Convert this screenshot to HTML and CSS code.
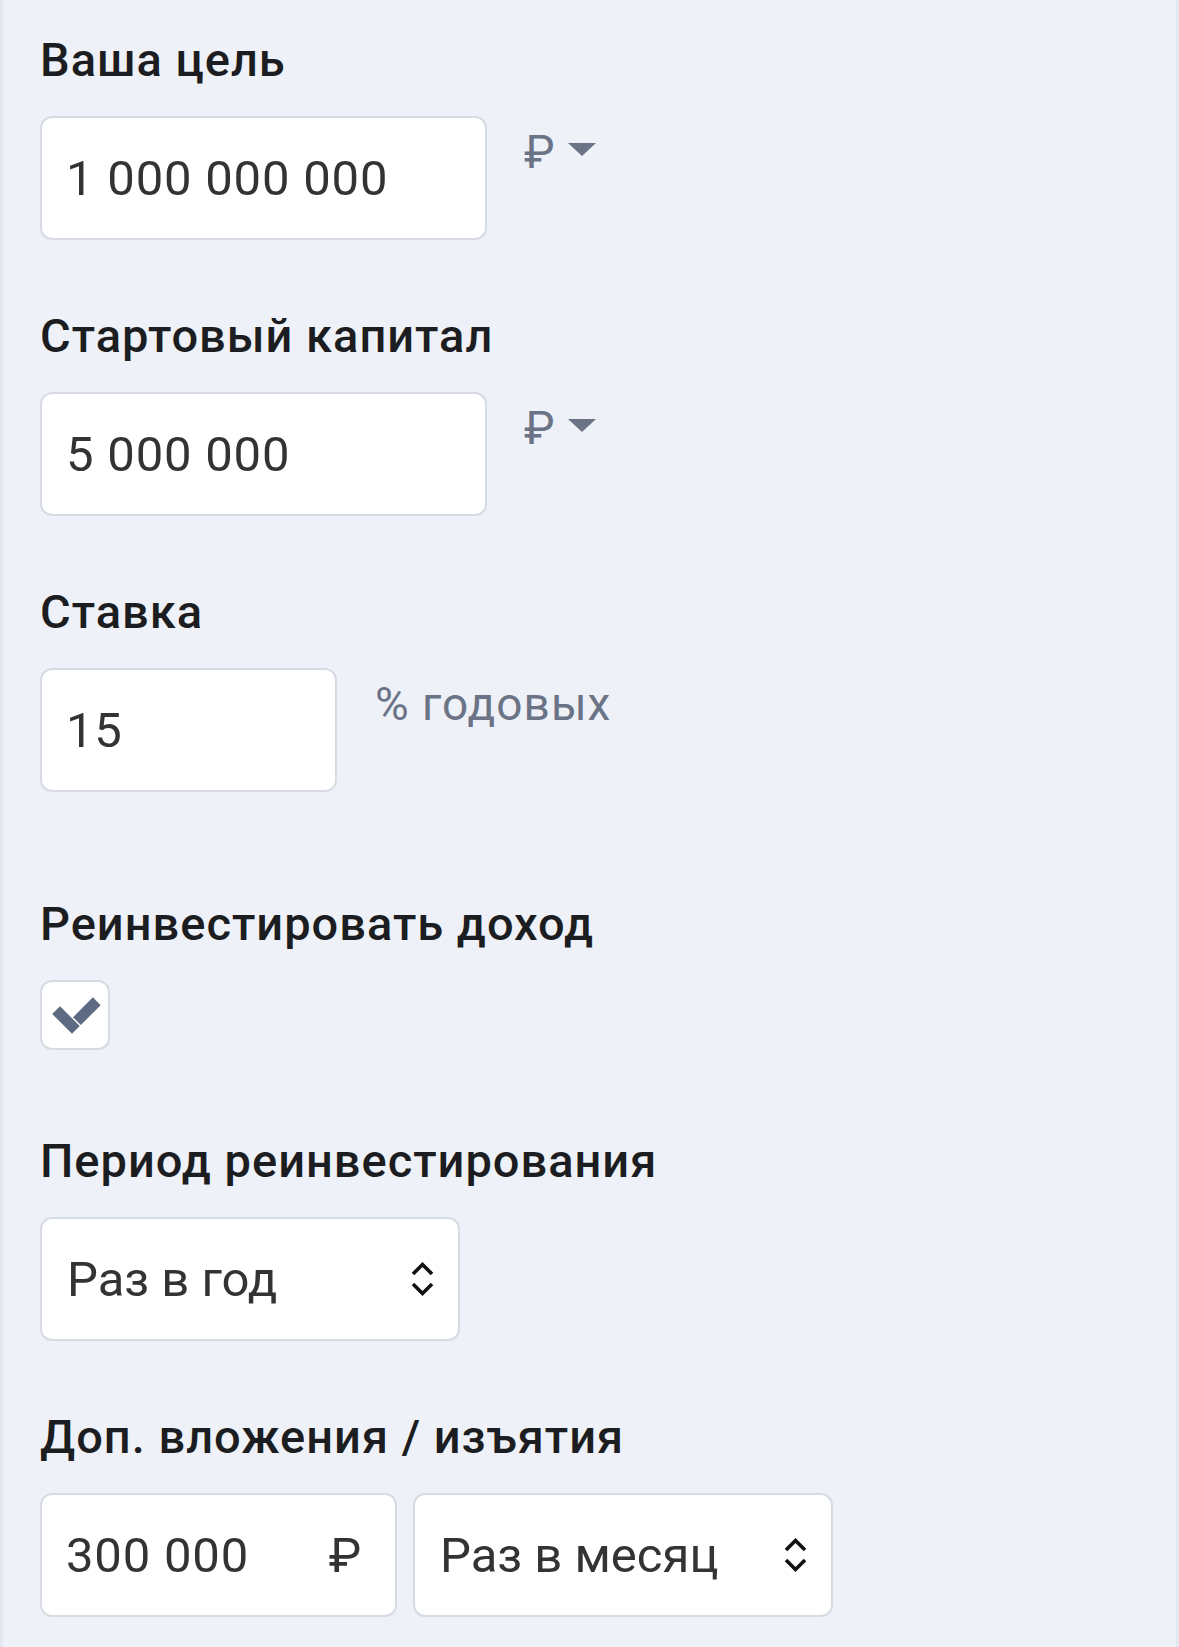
FILE: index.html
```html
<!DOCTYPE html>
<html lang="ru">
<head>
  <meta charset="UTF-8">
  <title>Калькулятор цели</title>
  <link rel="stylesheet" href="styles.css">
</head>
<body>
  <div class="page">

    <div class="field">
      <div class="field_label">Ваша цель</div>
      <div class="field_row">
        <div class="box box_wide num">1&nbsp;000&nbsp;000&nbsp;000</div>
        <div class="suffix">
          <span>₽</span>
          <svg class="caret" width="28" height="13" viewBox="0 0 28 13"><polygon points="0,0 28,0 14,13" fill="#6b7386"/></svg>
        </div>
      </div>
    </div>

    <div class="field">
      <div class="field_label">Стартовый капитал</div>
      <div class="field_row">
        <div class="box box_wide num">5&nbsp;000&nbsp;000</div>
        <div class="suffix">
          <span>₽</span>
          <svg class="caret" width="28" height="13" viewBox="0 0 28 13"><polygon points="0,0 28,0 14,13" fill="#6b7386"/></svg>
        </div>
      </div>
    </div>

    <div class="field field_rate">
      <div class="field_label">Ставка</div>
      <div class="field_row">
        <div class="box box_rate num">15</div>
        <div class="suffix suffix_text">% годовых</div>
      </div>
    </div>

    <div class="field field_check">
      <div class="field_label">Реинвестировать доход</div>
      <div class="checkbox">
        <svg width="66" height="66" viewBox="0 0 66 66">
          <polygon points="17.99,24.21 37.79,44.01 30.01,51.79 10.21,31.99" fill="#5e6a81"/>
          <polygon points="31.07,35.17 38.85,42.95 58.65,23.15 50.87,15.37" fill="#5e6a81"/>
        </svg>
      </div>
    </div>

    <div class="field">
      <div class="field_label">Период реинвестирования</div>
      <div class="box select select_period">
        <span>Раз в год</span>
        <svg class="chevrons" width="25" height="36" viewBox="0 0 25 36">
          <polyline points="3,13 12.5,3.5 22,13" fill="none" stroke="#111" stroke-width="3.6"/>
          <polyline points="3,23 12.5,32.5 22,23" fill="none" stroke="#111" stroke-width="3.6"/>
        </svg>
      </div>
    </div>

    <div class="field">
      <div class="field_label">Доп. вложения / изъятия</div>
      <div class="field_row field_row_gap">
        <div class="box box_money num">
          <span>300&nbsp;000</span>
          <span>₽</span>
        </div>
        <div class="box select select_freq">
          <span>Раз в месяц</span>
          <svg class="chevrons" width="25" height="36" viewBox="0 0 25 36">
            <polyline points="3,13 12.5,3.5 22,13" fill="none" stroke="#111" stroke-width="3.6"/>
            <polyline points="3,23 12.5,32.5 22,23" fill="none" stroke="#111" stroke-width="3.6"/>
          </svg>
        </div>
      </div>
    </div>

  </div>
</body>
</html>
```
FILE: styles.css
```css
html, body {
  margin: 0;
  padding: 0;
}
body {
  background-color: #eef1f7;
  font-family: Roboto, "Noto Sans", "Liberation Sans", sans-serif;
}
.page {
  min-height: 1647px;
  box-sizing: border-box;
  padding: 32px 0 0 37px;
  border-left: 3px solid #e3e7ef;
  border-right: 3px solid #e3e7ef;
}
.field {
  margin-bottom: 68px;
}
.field_rate {
  margin-bottom: 104px;
}
.field_check {
  margin-bottom: 83px;
}
.field_label {
  font-size: 47px;
  line-height: 56px;
  font-weight: 500;
  letter-spacing: 1px;
  color: #1c1d21;
  margin-bottom: 28px;
}
.field_row {
  display: flex;
  align-items: flex-start;
}
.field_row_gap {
  gap: 16px;
}
.box {
  display: flex;
  align-items: center;
  box-sizing: border-box;
  height: 124px;
  padding: 0 24px;
  background-color: #fff;
  border: 2px solid #d7dbe2;
  border-radius: 12px;
  font-size: 49px;
  color: #333;
}
.num {
  letter-spacing: 0.8px;
}
.box_wide {
  width: 447px;
}
.box_rate {
  width: 297px;
}
.box_money {
  width: 357px;
  justify-content: space-between;
  padding-right: 33px;
}
.select {
  justify-content: space-between;
  padding: 0 23px 0 25px;
}
.select_period {
  width: 420px;
}
.select_freq {
  width: 420px;
}
.suffix {
  display: flex;
  align-items: flex-start;
  margin-left: 37px;
  padding-top: 8px;
  font-size: 46px;
  line-height: 56px;
  color: #6b7386;
}
.suffix_text {
  margin-left: 38px;
  letter-spacing: 1px;
}
.caret {
  margin: 19px 0 0 13px;
}
.checkbox {
  width: 70px;
  height: 70px;
  box-sizing: border-box;
  background-color: #fff;
  border: 2px solid #d7dbe2;
  border-radius: 12px;
}
.checkbox svg {
  display: block;
}
```
